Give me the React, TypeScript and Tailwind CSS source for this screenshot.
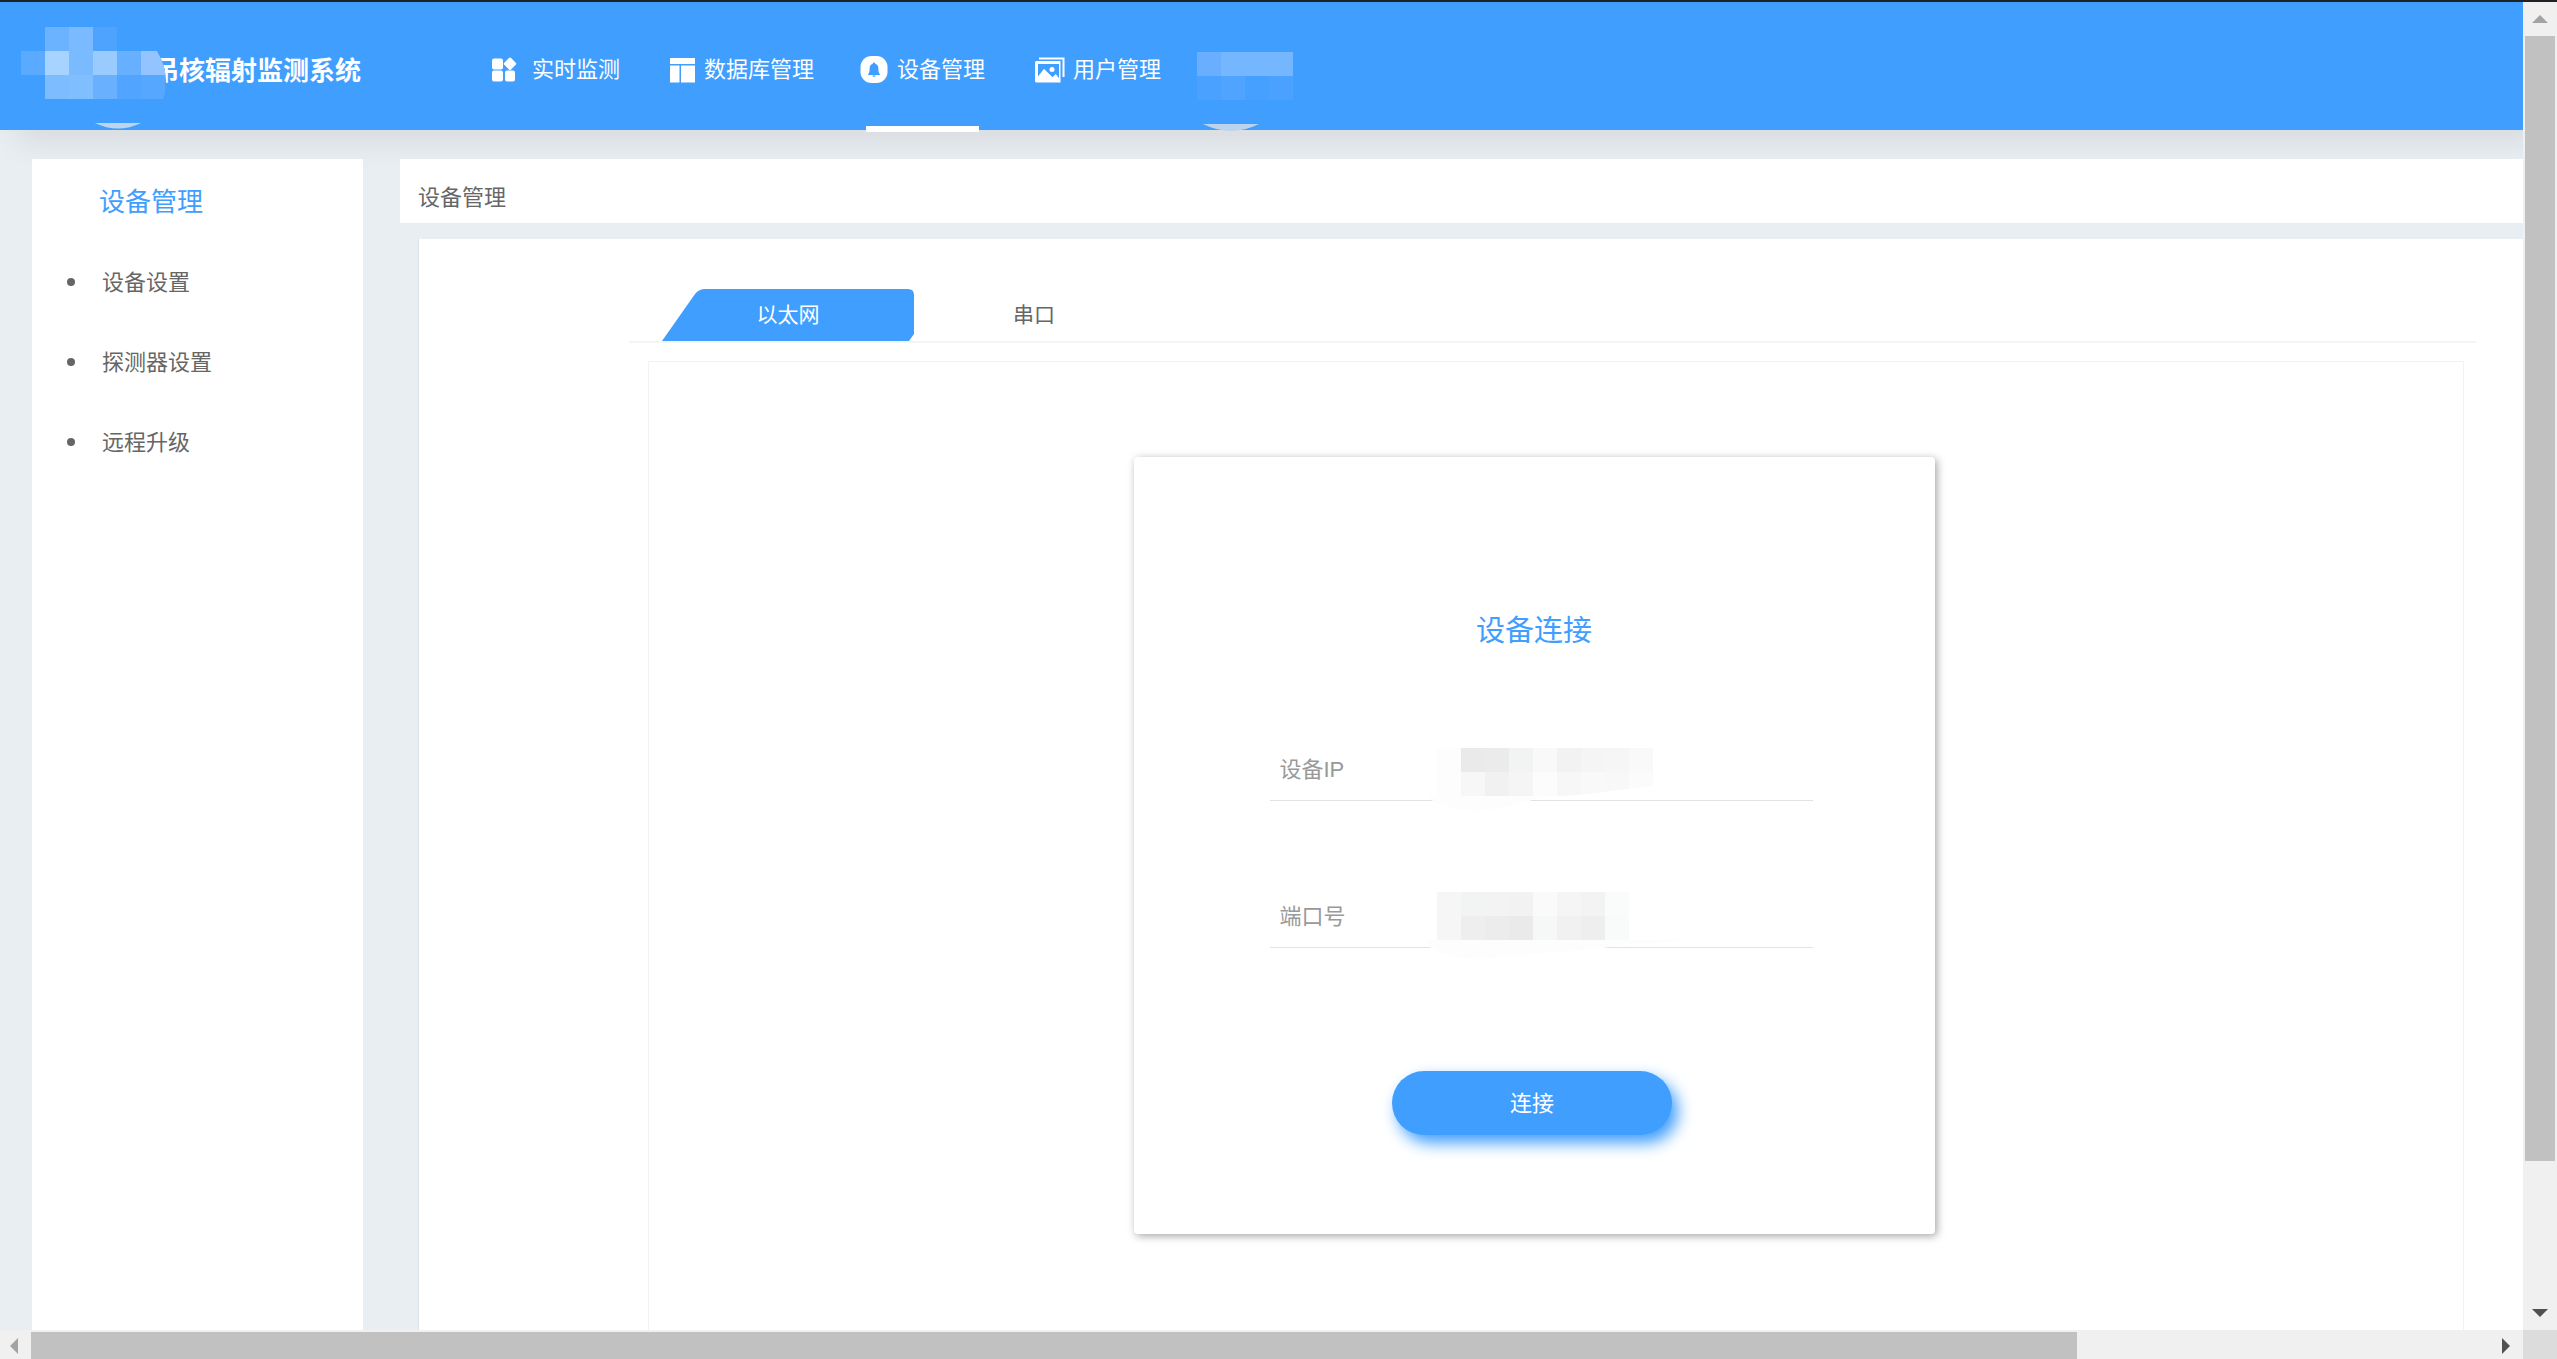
import { useState } from 'react';

// 顶部导航图标
function GridIcon() {
  return (
    <svg width="34" height="30" viewBox="0 0 34 30" fill="currentColor">
      <rect x="2" y="3.5" width="11" height="11" rx="2" />
      <rect x="2" y="15.5" width="11" height="11" rx="2" />
      <rect x="15" y="15.5" width="10" height="11" rx="2" />
      <rect x="15.2" y="4" width="9.6" height="9.6" rx="1.5" transform="rotate(45 20 8.8)" />
    </svg>
  );
}

function TableIcon() {
  return (
    <svg width="30" height="30" viewBox="0 0 30 30" fill="currentColor">
      <rect x="4" y="3" width="25" height="6" />
      <rect x="4" y="10.5" width="9.5" height="17" />
      <rect x="15" y="10.5" width="14" height="17" />
    </svg>
  );
}

function BellIcon() {
  return (
    <svg width="29" height="30" viewBox="0 0 29 30">
      <rect x="0.5" y="1" width="27" height="27" rx="11" fill="#fff" />
      <path
        d="M14 7.5c.7 0 1.1.5 1.2 1.2 2.3.7 3.2 2.6 3.2 4.8 0 3 .3 4.3 1.4 5.5v.9H8.2V19c1.1-1.2 1.4-2.5 1.4-5.500 0-2.200.9-4.100 3.200-4.800.1-.7.5-1.200 1.200-1.200zM12.300 20.600h3.400c-.2.800-.8 1.300-1.700 1.300s-1.500-.5-1.700-1.300z"
        fill="#409eff"
      />
    </svg>
  );
}

function PictureIcon() {
  return (
    <svg width="34" height="30" viewBox="0 0 34 30">
      <path d="M8 3.500H32.500V22" fill="none" stroke="#fff" strokeWidth="2" />
      <path
        d="M5.500 6h24v21.500h-24C4.700 27.500 4 26.900 4 26V7.500C4 6.600 4.700 6 5.500 6z"
        fill="#fff"
      />
      <path d="M7 9h21v14.200l-3.200-4.200-3.300 3.200-8.500-8.400L7 21.500z" fill="#409eff" />
      <circle cx="21" cy="14.500" r="2.500" fill="#fff" />
    </svg>
  );
}

const NAVS = [
  { name: '实时监测', icon: <GridIcon /> },
  { name: '数据库管理', icon: <TableIcon /> },
  { name: '设备管理', icon: <BellIcon /> },
  { name: '用户管理', icon: <PictureIcon /> },
];

const MENUS = ['设备设置', '探测器设置', '远程升级'];
const TABS = ['以太网', '串口'];

// 打码方块, 每格 24px, 空字符串不绘制
function Cells({ x, y, rows }: { x: number; y: number; rows: string[][] }) {
  return (
    <>
      {rows.map((row, r) =>
        row.map((color, c) =>
          color ? (
            <rect
              key={r + '-' + c}
              x={x + c * 24}
              y={y + r * 24}
              width="24"
              height="24"
              fill={color}
              shapeRendering="crispEdges"
            />
          ) : null,
        ),
      )}
    </>
  );
}

const LOGO_CELLS = [
  ['', '#6cb3ff', '#7abaff', '#4ea3ff', '', ''],
  ['#5aaaff', '#a6d3ff', '#7abaff', '#9acbff', '#66b0ff', '#94c4ff'],
  ['', '#7dbcff', '#80bfff', '#69b1ff', '#51a4ff', '#55a7ff'],
];
const USER_CELLS = [
  ['#6aafff', '#75b7ff', '#74b6ff', '#75b7ff'],
  ['#4aa1ff', '#50a4ff', '#45a0ff', '#4aa1ff'],
];
const IP_CELLS = [
  ['#fdfdfd', '#eaeaea', '#ebebeb', '#f1f4f3', '#f9f9f9', '#f2f2f2', '#f5f5f5', '#f6f6f6', '#f9f9f9'],
  ['#fdfdfd', '#f7f7f7', '#f1f1f1', '#f5f5f5', '#fcfcfc', '#f7f7f7', '#f9f9f9', '#f8f8f8', '#fbfbfb'],
];
const PORT_CELLS = [
  ['#f6f6f6', '#f1f4f3', '#f3f3f3', '#f2f2f2', '#fafafa', '#f5f5f5', '#f3f3f3', '#fafcfb'],
  ['#f6f6f6', '#eeeeee', '#ececec', '#eaeaea', '#f6f8f7', '#f1f1f1', '#eeeeee', '#f9fbfa'],
];

function Header() {
  const [active, setActive] = useState(2);

  return (
    <header className="flex h-32 shrink-0 bg-[#409eff] text-white shadow-[16px_10px_32px_rgba(0,0,0,0.09)]">
      <div className="relative flex w-[490px] shrink-0 items-center pt-2.5 pl-[153px]">
        <h1 className="text-[26px] font-bold whitespace-nowrap">吊核辐射监测系统</h1>
        <svg className="absolute top-0 left-0" width="180" height="128" viewBox="0 0 180 128">
          <path d="M12 20H145L157 49Q166 64 166 80Q166 90 163 97H12z" fill="#409eff" />
          <clipPath id="logo-clip">
            <path d="M0 0H140L157 49Q166 64 166 80Q166 90 163 97H0z" />
          </clipPath>
          <g clipPath="url(#logo-clip)">
            <Cells x={21} y={25} rows={LOGO_CELLS} />
          </g>
          <path d="M95 121H141Q118 132 95 121z" fill="#bcd5ee" />
        </svg>
      </div>
      <nav className="flex gap-[46px] text-[22px]">
        {NAVS.map((nav, i) => (
          <button
            key={nav.name}
            onClick={() => setActive(i)}
            className="relative flex items-center gap-2 pt-[7px] whitespace-nowrap"
          >
            {nav.icon}
            {nav.name}
            {active === i && (
              <span className="absolute inset-x-1.5 -bottom-0.5 h-1.5 bg-white" />
            )}
          </button>
        ))}
      </nav>
      <svg className="ml-9 shrink-0" width="100" height="130" viewBox="0 0 100 130">
        <Cells x={0} y={50} rows={USER_CELLS} />
        <path d="M6 122H62Q34 136 6 122z" fill="#bad4ed" />
      </svg>
    </header>
  );
}

function Sidebar() {
  return (
    <aside className="w-[331px] shrink-0 bg-white">
      <h2 className="pt-[23px] pl-[67px] text-[26px] leading-10 text-[#409eff]">设备管理</h2>
      <ul className="mt-5">
        {MENUS.map((menu) => (
          <li key={menu} className="flex h-20 items-center pl-[35px]">
            <span className="mr-[27px] size-2 rounded-full bg-[#666]" />
            <a href="#" className="text-[22px] text-[#666]">
              {menu}
            </a>
          </li>
        ))}
      </ul>
    </aside>
  );
}

function Tabs() {
  const [tab, setTab] = useState(0);

  return (
    <div className="mr-[47px] ml-[210px] flex border-b-2 border-[#f3f4f4] pl-[33px]">
      {TABS.map((name, i) => (
        <button
          key={name}
          onClick={() => setTab(i)}
          className={
            'relative h-[52px] text-[21px] ' +
            (tab === i ? 'w-[252px] text-white' : 'w-[240px] text-[#666]')
          }
        >
          {tab === i && (
            <svg
              className="absolute inset-0 size-full"
              viewBox="0 0 252 52"
              preserveAspectRatio="none"
              fill="#409eff"
            >
              <path d="M0 52L33 5Q37 0 43 0H246Q252 0 252 6V45L247 52z" />
            </svg>
          )}
          <span className="relative">{name}</span>
        </button>
      ))}
    </div>
  );
}

function ConnectForm() {
  return (
    <form
      onSubmit={(e) => e.preventDefault()}
      className="flex w-[801px] flex-col items-center rounded bg-white pt-[154px] pb-[99px] shadow-[2px_2px_8px_rgba(0,0,0,0.36)]"
    >
      <h3 className="text-[29px] leading-10 text-[#409eff]">设备连接</h3>
      <div className="relative mt-[89px] ml-3.5 flex h-[61px] w-[543px] border-b border-[#e2e2e2] pl-2.5 text-[22px] text-[#999]">
        <label htmlFor="ip" className="w-40 leading-[60px]">
          设备IP
        </label>
        <input id="ip" className="min-w-0 flex-1 outline-none" />
        <svg className="pointer-events-none absolute top-0 left-[155px]" width="250" height="76" viewBox="0 0 250 76">
          <path d="M2 56H120L104 61Q70 70 52 71Q26 71 8 61z" fill="#fdfdfd" />
          <Cells x={12} y={8} rows={IP_CELLS} />
          <path d="M120 57L165 54L185 51L228 46V57z" fill="#fff" />
        </svg>
      </div>
      <div className="relative mt-[86px] ml-3.5 flex h-[61px] w-[543px] border-b border-[#e2e2e2] pl-2.5 text-[22px] text-[#999]">
        <label htmlFor="port" className="w-40 leading-[60px]">
          端口号
        </label>
        <input id="port" className="min-w-0 flex-1 outline-none" />
        <svg className="pointer-events-none absolute top-0 left-[155px]" width="290" height="76" viewBox="0 0 290 76">
          <path d="M0 53H275L205 57L178 61L66 71Q30 75 6 61z" fill="#fdfdfd" />
          <Cells x={12} y={5} rows={PORT_CELLS} />
        </svg>
      </div>
      <button className="mt-[123px] mr-1 h-16 w-[280px] rounded-full bg-[#409eff] text-[22px] text-white shadow-[6px_8px_16px_#409eff]">
        连接
      </button>
    </form>
  );
}

function Arrow({ d, color }: { d: string; color: string }) {
  return (
    <svg width="16" height="16" viewBox="0 0 16 16" fill={color}>
      <path d={d} />
    </svg>
  );
}

export default function App() {
  return (
    <div className="flex h-screen flex-col overflow-hidden border-t-2 border-[#1d2227] bg-[#f0f0f0] font-['Liberation_Sans','Noto_Sans_CJK_SC',sans-serif]">
      <div className="flex min-h-0 flex-1">
        <div className="flex min-w-0 flex-1 flex-col overflow-hidden bg-[#e9eef2]">
          <Header />
          <div className="flex min-h-0 flex-1 pt-[29px] pl-8">
            <Sidebar />
            <main className="ml-[37px] flex min-w-0 flex-1 flex-col">
              <div className="flex h-16 shrink-0 items-center bg-white pt-3 pl-[18px] text-[22px] text-[#666]">
                设备管理
              </div>
              <section className="mt-4 ml-[18px] flex min-h-0 flex-1 flex-col border-l border-[#dfe2e5] bg-white pt-[50px]">
                <Tabs />
                <div className="mt-[18px] mr-[59px] ml-[229px] flex min-h-0 flex-1 items-start justify-center border border-b-0 border-[#f2f2f2] pt-[95px] pr-11">
                  <ConnectForm />
                </div>
              </section>
            </main>
          </div>
        </div>
        {/* 纵向滚动条 */}
        <div className="flex w-[34px] shrink-0 flex-col px-0.5">
          <div className="flex h-[34px] items-center justify-center">
            <Arrow d="M0 12L8 4L16 12z" color="#a3a3a3" />
          </div>
          <div className="flex-[25] bg-[#c1c1c1]" />
          <div className="flex-[3]" />
          <div className="flex h-[34px] items-center justify-center">
            <Arrow d="M0 4L8 12L16 4z" color="#505050" />
          </div>
        </div>
      </div>
      {/* 横向滚动条 */}
      <div className="flex h-[29px] shrink-0">
        <div className="flex w-[31px] items-center justify-center pt-0.5 pr-1">
          <Arrow d="M12 0L4 8L12 16z" color="#a3a3a3" />
        </div>
        <div className="mt-0.5 flex-[69] bg-[#c1c1c1]" />
        <div className="flex-[14]" />
        <div className="flex w-[31px] items-center justify-center pt-0.5 pr-1">
          <Arrow d="M4 0L12 8L4 16z" color="#505050" />
        </div>
        <div className="w-[34px] bg-[#dcdcdc]" />
      </div>
    </div>
  );
}
